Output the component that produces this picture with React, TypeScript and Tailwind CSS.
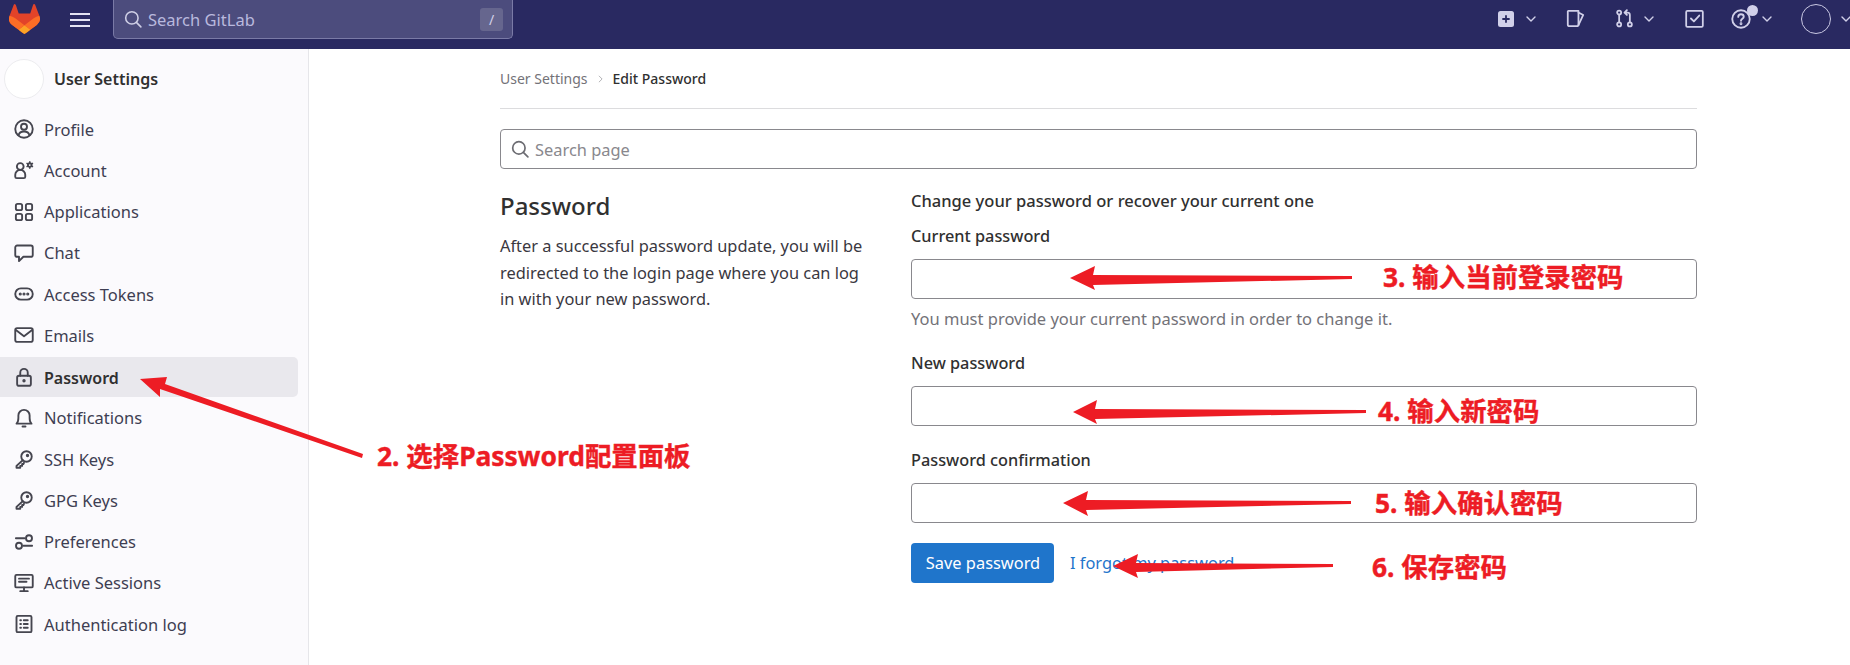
import type { ReactNode } from 'react';

const font = '[font-family:"Noto_Sans","Noto_Sans_CJK_SC",sans-serif]';

function Glyph({ children, className = 'h-5 w-5' }: { children: ReactNode; className?: string }) {
  return (
    <svg viewBox="0 0 16 16" fill="none" stroke="currentColor" strokeWidth="1.5" strokeLinecap="round" strokeLinejoin="round" className={`${className} shrink-0`}>
      {children}
    </svg>
  );
}

const KeyIcon = (
  <>
    <circle cx="10" cy="6" r="4.2" />
    <path d="M7 9 L2 13.5 V15 H5 V13.5 H6.5 V12 H7.5 L8 11" />
    <circle cx="10.8" cy="5.2" r="0.6" fill="currentColor" />
  </>
);

const navItems: { label: string; active?: boolean; icon: ReactNode }[] = [
  {
    label: 'Profile',
    icon: (
      <>
        <circle cx="8" cy="8" r="7" />
        <circle cx="8" cy="6.2" r="2.4" />
        <path d="M3.6 13 C4.2 10.8 6 10 8 10 C10 10 11.8 10.8 12.4 13" />
      </>
    ),
  },
  {
    label: 'Account',
    icon: (
      <>
        <circle cx="5" cy="5.2" r="2.7" />
        <path d="M2.2 14.5 C1.4 14.5 1 14 1 13.3 V11.8 C1 9.6 3 7.9 5 7.9 C7 7.9 9 9.6 9 11.8 V13.3 C9 14 8.6 14.5 7.8 14.5 Z" />
        <circle cx="12.6" cy="4" r="2.2" fill="currentColor" stroke="none" />
        <path d="M12.6 1 V7 M10 2.5 L15.2 5.5 M15.2 2.5 L10 5.5" strokeWidth="1.2" strokeLinecap="butt" />
        <circle cx="12.6" cy="4" r="0.7" fill="#fbfafd" stroke="none" />
      </>
    ),
  },
  {
    label: 'Applications',
    icon: (
      <>
        <rect x="1.5" y="1.5" width="5" height="5" rx="1.4" />
        <rect x="9.5" y="1.5" width="5" height="5" rx="1.4" />
        <rect x="1.5" y="9.5" width="5" height="5" rx="1.4" />
        <rect x="9.5" y="9.5" width="5" height="5" rx="1.4" />
      </>
    ),
  },
  {
    label: 'Chat',
    icon: <path d="M2.5 2 H13.5 C14.3 2 15 2.7 15 3.5 V9.5 C15 10.3 14.3 11 13.5 11 H7.5 L4 14.5 V11 H2.5 C1.7 11 1 10.3 1 9.5 V3.5 C1 2.7 1.7 2 2.5 2 Z" />,
  },
  {
    label: 'Access Tokens',
    icon: (
      <>
        <rect x="1" y="3.5" width="14" height="9" rx="4.5" />
        <circle cx="5" cy="8" r="0.5" fill="currentColor" />
        <circle cx="8" cy="8" r="0.5" fill="currentColor" />
        <circle cx="11" cy="8" r="0.5" fill="currentColor" />
      </>
    ),
  },
  {
    label: 'Emails',
    icon: (
      <>
        <rect x="1" y="2.5" width="14" height="11" rx="1.5" />
        <path d="M1.5 4 L8 9 L14.5 4" />
      </>
    ),
  },
  {
    label: 'Password',
    active: true,
    icon: (
      <>
        <rect x="2.5" y="7" width="11" height="8" rx="1.5" />
        <path d="M5 7 V4.5 C5 2.8 6.3 1.5 8 1.5 C9.7 1.5 11 2.8 11 4.5 V7" />
        <circle cx="8" cy="11" r="0.6" fill="currentColor" />
      </>
    ),
  },
  {
    label: 'Notifications',
    icon: (
      <>
        <path d="M2 12.5 H14 C12.8 11.5 12.5 10 12.5 8 V6 C12.5 3.5 10.5 1.5 8 1.5 C5.5 1.5 3.5 3.5 3.5 6 V8 C3.5 10 3.2 11.5 2 12.5 Z" />
        <path d="M6.8 14.8 H9.2" />
      </>
    ),
  },
  { label: 'SSH Keys', icon: KeyIcon },
  { label: 'GPG Keys', icon: KeyIcon },
  {
    label: 'Preferences',
    icon: (
      <>
        <path d="M1.5 5 H8.5" />
        <circle cx="12" cy="5" r="2.4" />
        <path d="M7.5 11 H14.5" />
        <circle cx="4" cy="11" r="2.4" />
      </>
    ),
  },
  {
    label: 'Active Sessions',
    icon: (
      <>
        <rect x="1" y="1.5" width="14" height="10" rx="1" />
        <path d="M4 4.5 H12 M4 7 H10 M5 14.5 H11 M8 11.5 V14.5" />
      </>
    ),
  },
  {
    label: 'Authentication log',
    icon: (
      <>
        <rect x="2" y="1.5" width="12" height="13" rx="1" />
        <path d="M5 5 H5.6 M7.8 5 H11 M5 8 H5.6 M7.8 8 H11 M5 11 H5.6 M7.8 11 H11" />
      </>
    ),
  },
];

const Chevron = ({ className = '' }: { className?: string }) => (
  <svg viewBox="0 0 10 6" fill="none" stroke="currentColor" strokeWidth="1.4" strokeLinecap="round" strokeLinejoin="round" className={`h-[6px] w-[10px] shrink-0 ${className}`}>
    <path d="M1 1 L5 5 L9 1" />
  </svg>
);

function TopBar() {
  return (
    <header className="flex h-[49px] shrink-0 items-start bg-[#292961] text-[#d1d0e9]">
      <svg viewBox="0 0 25 24" className="ml-[9px] mt-[4px] h-[30px] w-[31px] shrink-0">
        <path d="m24.507 9.5-.034-.09L21.082.562a.896.896 0 0 0-1.694.091l-2.29 7.01H7.825L5.535.653a.898.898 0 0 0-1.694-.09L.451 9.411.416 9.5a6.297 6.297 0 0 0 2.09 7.278l.012.01.03.022 5.16 3.867 2.56 1.935 1.554 1.176a1.051 1.051 0 0 0 1.268 0l1.555-1.176 2.56-1.935 5.197-3.89.014-.01A6.297 6.297 0 0 0 24.507 9.5Z" fill="#E24329" />
        <path d="m24.507 9.5-.034-.09a11.44 11.44 0 0 0-4.56 2.051l-7.447 5.632 4.742 3.584 5.197-3.89.014-.01A6.297 6.297 0 0 0 24.507 9.5Z" fill="#FC6D26" />
        <path d="m7.707 20.677 2.56 1.935 1.555 1.176a1.051 1.051 0 0 0 1.268 0l1.555-1.176 2.56-1.935-4.743-3.584-4.755 3.584Z" fill="#FCA326" />
        <path d="M5.01 11.461a11.43 11.43 0 0 0-4.56-2.05L.416 9.5a6.297 6.297 0 0 0 2.09 7.278l.012.01.03.022 5.16 3.867 4.745-3.584-7.444-5.632Z" fill="#FC6D26" />
      </svg>
      <div className="ml-[30px] mt-[13px] flex w-[20px] shrink-0 flex-col gap-[4px]">
        <span className="h-[2px] bg-[#e3e2f2]" />
        <span className="h-[2px] bg-[#e3e2f2]" />
        <span className="h-[2px] bg-[#e3e2f2]" />
      </div>
      <div className="ml-[23px] flex h-[39px] w-[400px] items-center rounded-b-[5px] border border-t-0 border-[#7a7aa6] bg-[#4c4c7d] pl-[10px] pr-[9px]">
        <svg viewBox="0 0 16 16" fill="none" stroke="currentColor" strokeWidth="1.4" strokeLinecap="round" className="h-[18px] w-[18px] shrink-0 text-[#cfcfe6]">
          <circle cx="7" cy="7" r="5.5" />
          <path d="M11 11 L15 15" />
        </svg>
        <span className="ml-[6px] mt-[2px] text-[16.5px] text-[#b9b9de]">Search GitLab</span>
        <span className="ml-auto flex h-[23px] w-[23px] items-center justify-center rounded-[3px] bg-[#66668e] text-[14px] text-[#d1d0e9]">/</span>
      </div>

      <div className="ml-auto flex items-start">
        <svg viewBox="0 0 16 16" className="mt-[11px] h-[16px] w-[16px] shrink-0">
          <rect width="16" height="16" rx="2.5" fill="currentColor" />
          <path d="M8 5 V11 M5 8 H11" stroke="#292961" strokeWidth="1.8" strokeLinecap="round" />
        </svg>
        <Chevron className="ml-[12px] mt-[16px]" />
        <Glyph className="ml-[30px] mt-[9px] h-[19px] w-[19px]">
          <path d="M2 1.5 H10.5 V13 C10.5 14 9.8 14.5 9 14.5 H3 C2.3 14.5 1.5 14 1.5 13 V2 Z" />
          <path d="M10.5 3 L14.5 5 L10.5 13.5" />
        </Glyph>
        <Glyph className="ml-[30px] mt-[9px] h-[19px] w-[19px]">
          <circle cx="3.5" cy="3" r="1.7" />
          <circle cx="3.5" cy="13" r="1.7" />
          <circle cx="12.5" cy="13" r="1.7" />
          <path d="M3.5 4.7 V11.3 M12.5 11.3 V5 C12.5 3.8 11.8 3 10.5 3 H8.5 M10 1 L8 3 L10 5" />
        </Glyph>
        <Chevron className="ml-[10px] mt-[16px]" />
        <Glyph className="ml-[31px] mt-[9px] h-[19px] w-[19px]">
          <rect x="1" y="1.5" width="14" height="13.5" rx="1" />
          <path d="M5 8 L7.5 10.5 L12 5.5" />
        </Glyph>
        <div className="relative ml-[27px] mt-[9px] mr-[11px]">
          <Glyph className="h-[20px] w-[20px]">
            <circle cx="8" cy="8" r="7" />
            <path d="M5.8 6.3 C5.8 5 6.8 4.2 8 4.2 C9.3 4.2 10.2 5 10.2 6.2 C10.2 7.8 8 7.8 8 9.4" />
            <circle cx="8" cy="11.8" r="0.4" fill="currentColor" />
          </Glyph>
          <span className="absolute left-[16px] top-[-4px] h-[11px] w-[11px] rounded-full bg-[#d1d0e9]" />
        </div>
        <Chevron className="mt-[16px]" />
        <span className="ml-[29px] mt-[4px] h-[30px] w-[30px] rounded-full border border-[#c9c8e3]" />
        <Chevron className="ml-[10px] mt-[16px] mr-[-1px]" />
      </div>
    </header>
  );
}

function Sidebar() {
  return (
    <aside className="w-[309px] shrink-0 border-r border-[#e6e6ea] bg-[#fbfafd] pr-[10px]">
      <div className="flex h-[60px] items-center pl-[4px]">
        <span className="h-[40px] w-[40px] rounded-full border border-[#ececef] bg-white" />
        <span className="ml-[10px] text-[16px] font-semibold text-[#303030]">User Settings</span>
      </div>
      <nav className="flex flex-col gap-[1.25px]">
        {navItems.map((item) => (
          <a
            key={item.label}
            className={`flex h-[40px] items-center rounded-r-[5px] pl-[14px] ${item.active ? 'bg-[#e9e8ed] text-[16px] font-semibold text-[#303030]' : 'text-[16.5px] text-[#3e3e52]'}`}
          >
            <span className="text-[#45454f]">
              <Glyph>{item.icon}</Glyph>
            </span>
            <span className="ml-[10px] mt-[2px]">{item.label}</span>
          </a>
        ))}
      </nav>
    </aside>
  );
}

function Field({ label, className = '' }: { label: string; className?: string }) {
  return (
    <div className={className}>
      <label className="block h-[22px] text-[16.3px] font-medium leading-[20px] text-[#303030]">{label}</label>
      <input type="password" className="mt-[11px] block h-[40px] w-full rounded-[4px] border border-[#89888d] bg-white" />
    </div>
  );
}

function PasswordPage() {
  return (
    <main className="ml-[191px] w-[1197px] shrink-0">
      <div className="flex h-[60px] items-center border-b border-[#dcdcde] text-[14px]">
        <span className="text-[#737278]">User Settings</span>
        <svg viewBox="0 0 6 10" fill="none" stroke="#a0a0a5" strokeWidth="1" className="ml-[10px] h-[8px] w-[5px]">
          <path d="M1 1 L5 5 L1 9" />
        </svg>
        <span className="ml-[10px] font-medium text-[#303030]">Edit Password</span>
      </div>
      <div className="mt-[20px] flex h-[40px] items-center rounded-[4px] border border-[#89888d] px-[10px]">
        <svg viewBox="0 0 16 16" fill="none" stroke="#6c6c72" strokeWidth="1.5" strokeLinecap="round" className="h-[18px] w-[18px]">
          <circle cx="7" cy="7" r="5.5" />
          <path d="M11 11 L15 15" />
        </svg>
        <span className="ml-[6px] mt-[2px] text-[16.4px] text-[#89888d]">Search page</span>
      </div>
      <div className="grid grid-cols-[411px_1fr]">
        <section className="pr-[20px]">
          <h2 className="mt-[20px] text-[24px] font-medium leading-[33px] text-[#303030]">Password</h2>
          <p className="mt-[11px] w-[370px] text-[16.4px] leading-[26.5px] text-[#3a383f]">
            After a successful password update, you will be redirected to the login page where you can log in with your new password.
          </p>
        </section>
        <section>
          <h3 className="mt-[21px] h-[22px] text-[16.5px] font-medium leading-[22px] text-[#303030]">Change your password or recover your current one</h3>
          <Field label="Current password" className="mt-[14px]" />
          <p className="mt-[9px] h-[22px] text-[16.5px] leading-[22px] text-[#737278]">You must provide your current password in order to change it.</p>
          <Field label="New password" className="mt-[23px]" />
          <Field label="Password confirmation" className="mt-[24px]" />
          <div className="mt-[20px] flex items-center">
            <button className="h-[40px] w-[143px] rounded-[4px] bg-[#1f75cb] pl-[1px] text-[16.4px] text-white">Save password</button>
            <a className="ml-[16px] text-[16.4px] text-[#1f75cb]">I forgot my password</a>
          </div>
        </section>
      </div>
    </main>
  );
}

const notes = [
  { text: '2. 选择Password配置面板', className: 'left-[377px] top-[437px]' },
  { text: '3. 输入当前登录密码', className: 'left-[1383px] top-[258px]' },
  { text: '4. 输入新密码', className: 'left-[1378px] top-[392px]' },
  { text: '5. 输入确认密码', className: 'left-[1375px] top-[484px]' },
  { text: '6. 保存密码', className: 'left-[1372px] top-[548px]' },
];

const arrows = [
  '140,379 167,377 165,384 363,454 362,458 160,389 160,397',
  '1070,278 1095,266 1093,275 1352,276 1352,279 1093,285 1095,290',
  '1073,412 1097,400 1095,409 1366,410 1366,413 1095,419 1097,424',
  '1063,503 1088,491 1086,500 1351,501 1351,504 1086,510 1088,516',
  '1113,566 1138,554 1136,563 1333,564 1333,567 1136,572 1138,578',
];

export default function App() {
  return (
    <div className={`relative flex h-[665px] w-[1850px] flex-col overflow-hidden bg-white ${font}`}>
      <TopBar />
      <div className="flex min-h-0 flex-1">
        <Sidebar />
        <PasswordPage />
      </div>

      <svg viewBox="0 0 1850 665" className="pointer-events-none absolute inset-0 h-[665px] w-[1850px]">
        {arrows.map((points) => (
          <polygon key={points} points={points} fill="#ed1c24" />
        ))}
      </svg>
      {notes.map((note) => (
        <span key={note.text} className={`absolute whitespace-nowrap text-[26.4px] font-bold leading-[38px] text-[#ed1c24] [-webkit-text-stroke:0.4px_#ed1c24] ${note.className}`}>
          {note.text}
        </span>
      ))}
    </div>
  );
}
